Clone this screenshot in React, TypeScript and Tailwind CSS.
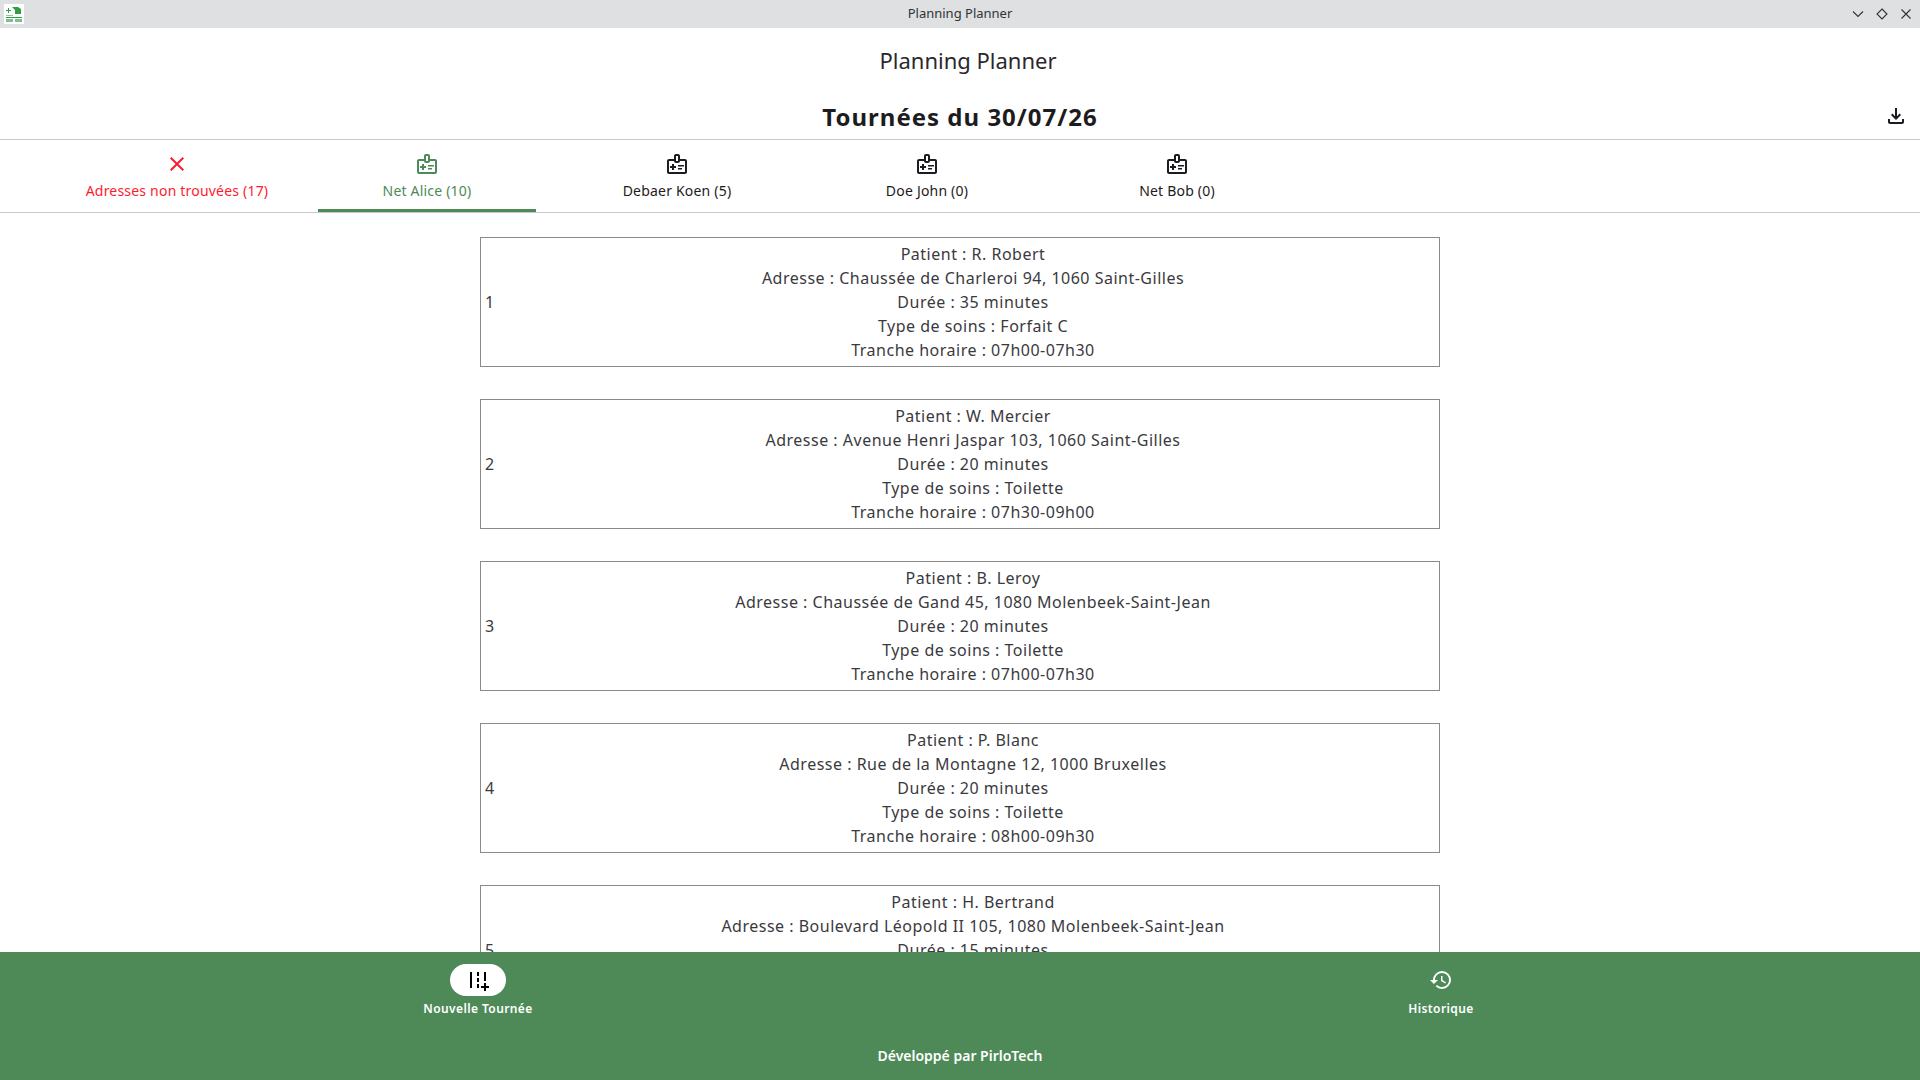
import { MdAddRoad, MdClose, MdHistory, MdOutlineFileDownload, MdOutlineMedicalInformation } from "react-icons/md";

const tabs = [
  { label: "Adresses non trouvées (17)", kind: "error" },
  { label: "Net Alice (10)", kind: "active" },
  { label: "Debaer Koen (5)", kind: "normal" },
  { label: "Doe John (0)", kind: "normal" },
  { label: "Net Bob (0)", kind: "normal" },
];

const visits = [
  { patient: "R. Robert", address: "Chaussée de Charleroi 94, 1060 Saint-Gilles", duration: "35 minutes", care: "Forfait C", slot: "07h00-07h30" },
  { patient: "W. Mercier", address: "Avenue Henri Jaspar 103, 1060 Saint-Gilles", duration: "20 minutes", care: "Toilette", slot: "07h30-09h00" },
  { patient: "B. Leroy", address: "Chaussée de Gand 45, 1080 Molenbeek-Saint-Jean", duration: "20 minutes", care: "Toilette", slot: "07h00-07h30" },
  { patient: "P. Blanc", address: "Rue de la Montagne 12, 1000 Bruxelles", duration: "20 minutes", care: "Toilette", slot: "08h00-09h30" },
  { patient: "H. Bertrand", address: "Boulevard Léopold II 105, 1080 Molenbeek-Saint-Jean", duration: "15 minutes", care: "Toilette", slot: "08h00-09h30" },
];

function AppLogo() {
  return (
    <div className="w-5 h-5 bg-white flex items-center justify-center shrink-0">
      <svg width="20" height="20" viewBox="0 0 20 20">
        <path d="M2 6h2V4h1v2h2v1H5v2H4V7H2z" fill="#2f9e44" />
        <path d="M8 3h6l3 2v5H11V6z" fill="#2f9e44" />
        <rect x="2" y="11" width="7" height="1" fill="#8cc79a" />
        <rect x="2" y="13" width="16" height="1" fill="#2f9e44" />
        <rect x="2" y="15" width="7" height="3" fill="#7cc28a" />
        <rect x="11" y="15" width="7" height="3" fill="#7cc28a" />
      </svg>
    </div>
  );
}

function TitleBar() {
  return (
    <div className="h-7 bg-[#dee0e2] grid grid-cols-3 items-center px-1 shrink-0">
      <AppLogo />
      <div className="text-center text-[13px] text-[#2e3436]">Planning Planner</div>
      <div className="flex items-center justify-end gap-[10px] pr-[3px] text-[#2e3436]">
        <svg width="14" height="14" viewBox="0 0 14 14" fill="none" stroke="currentColor" strokeWidth="1.1">
          <path d="M2 4.5l5 5 5-5" />
        </svg>
        <svg width="14" height="14" viewBox="0 0 14 14" fill="none" stroke="currentColor" strokeWidth="1.1">
          <path d="M7 2l5 5-5 5-5-5z" />
        </svg>
        <svg width="14" height="14" viewBox="0 0 14 14" fill="none" stroke="currentColor" strokeWidth="1.1">
          <path d="M2.5 2.5l9 9M11.5 2.5l-9 9" />
        </svg>
      </div>
    </div>
  );
}

function TabItem({ label, kind }: { label: string; kind: string }) {
  const color = kind === "error" ? "text-[#ff1a2e]" : kind === "active" ? "text-[#4e8a57]" : "text-[#1d1b20]";
  return (
    <div className={`w-[250px] px-4 flex ${color}`}>
      <div className={`w-full h-[72px] flex flex-col items-center pt-[12px] border-b-[3px] ${kind === "active" ? "border-[#4e8a57]" : "border-transparent"}`}>
        {kind === "error" ? <MdClose size={24} /> : <MdOutlineMedicalInformation size={24} />}
        <span className="mt-[5px] text-sm leading-5 whitespace-nowrap tracking-[0.2px]">{label}</span>
      </div>
    </div>
  );
}

function VisitCard({ index, visit }: { index: number; visit: (typeof visits)[number] }) {
  return (
    <div className="w-[960px] shrink-0 border border-[#8a8a8a] p-1 flex items-center text-base leading-6 tracking-[0.5px] text-[#3a3a3e]">
      <div className="w-[26px] shrink-0">{index}</div>
      <div className="flex-1 text-center">
        <div>Patient : {visit.patient}</div>
        <div>Adresse : {visit.address}</div>
        <div>Durée : {visit.duration}</div>
        <div>Type de soins : {visit.care}</div>
        <div>Tranche horaire : {visit.slot}</div>
      </div>
    </div>
  );
}

export default function App() {
  return (
    <div className="h-screen w-full flex flex-col overflow-hidden bg-white font-['Noto_Sans',sans-serif]">
      <TitleBar />

      <div className="h-[50px] shrink-0 flex items-center justify-center pl-4 pt-[14px] text-[22px] text-[#2a282e]">Planning Planner</div>

      <div className="h-[62px] shrink-0 relative flex items-center justify-center border-b border-[#cac4d0] pt-[16px]">
        <h1 className="text-2xl font-bold tracking-[1px] text-[#1d1b20]">Tournées du 30/07/26</h1>
        <MdOutlineFileDownload size={24} className="absolute right-3 top-[26px] text-[#1d1b20]" />
      </div>

      <div className="shrink-0 flex pl-[52px] border-b border-[#cac4d0]">
        {tabs.map((tab) => (
          <TabItem key={tab.label} label={tab.label} kind={tab.kind} />
        ))}
      </div>

      <div className="flex-1 min-h-0 overflow-hidden flex flex-col items-center gap-8 pt-6">
        {visits.map((visit, i) => (
          <VisitCard key={visit.patient} index={i + 1} visit={visit} />
        ))}
      </div>

      <div className="h-[128px] shrink-0 bg-[#4e8a57] text-white flex flex-col">
        <div className="flex pt-3">
          <div className="w-[956px] flex flex-col items-center">
            <div className="w-14 h-8 rounded-full bg-white flex items-center justify-center text-black">
              <MdAddRoad size={24} />
            </div>
            <span className="mt-[3px] text-xs leading-5 font-semibold tracking-[0.4px]">Nouvelle Tournée</span>
          </div>
          <div className="flex-1 pl-[6px] flex flex-col items-center">
            <div className="w-14 h-8 flex items-center justify-center">
              <MdHistory size={24} />
            </div>
            <span className="mt-[3px] text-xs leading-5 font-semibold tracking-[0.4px]">Historique</span>
          </div>
        </div>
        <div className="text-center text-sm font-semibold mt-[27px]">Développé par PirloTech</div>
      </div>
    </div>
  );
}
